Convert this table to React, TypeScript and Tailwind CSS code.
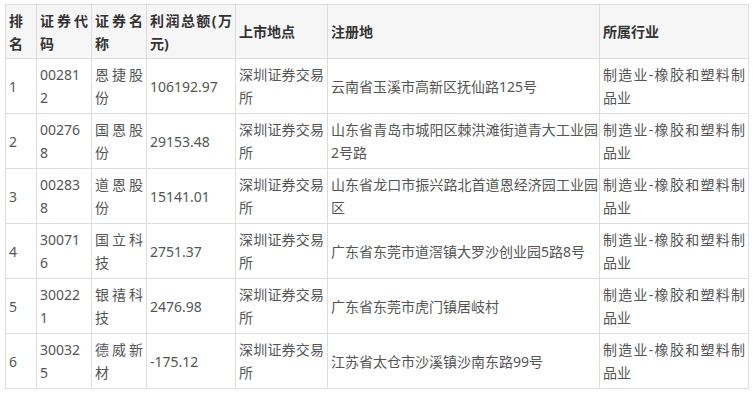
const rows = [
  ["1", "002812", "恩捷股份", "106192.97", "深圳证券交易所", "云南省玉溪市高新区抚仙路125号", "制造业-橡胶和塑料制品业"],
  ["2", "002768", "国恩股份", "29153.48", "深圳证券交易所", "山东省青岛市城阳区棘洪滩街道青大工业园2号路", "制造业-橡胶和塑料制品业"],
  ["3", "002838", "道恩股份", "15141.01", "深圳证券交易所", "山东省龙口市振兴路北首道恩经济园工业园区", "制造业-橡胶和塑料制品业"],
  ["4", "300716", "国立科技", "2751.37", "深圳证券交易所", "广东省东莞市道滘镇大罗沙创业园5路8号", "制造业-橡胶和塑料制品业"],
  ["5", "300221", "银禧科技", "2476.98", "深圳证券交易所", "广东省东莞市虎门镇居岐村", "制造业-橡胶和塑料制品业"],
  ["6", "300325", "德威新材", "-175.12", "深圳证券交易所", "江苏省太仓市沙溪镇沙南东路99号", "制造业-橡胶和塑料制品业"],
];

const headers = ["排名", "证券代码", "证券名称", "利润总额(万元)", "上市地点", "注册地", "所属行业"];
const widths = [31, 55, 55, 89, 92, 272, 149];
// the address column needs a tighter right edge so 19 characters fit on a line
const pad = (i: number) => (i === 5 ? "pl-[3px] pr-[1px]" : "px-[3px]");

export default function App() {
  return (
    <div className="bg-white w-[753px] h-[394px] pl-[5px] pt-[4px] font-['Noto_Sans','Noto_Sans_CJK_SC',sans-serif]">
      <table className="table-fixed border-collapse w-[744px] text-[14px] leading-[23px]">
        <colgroup>
          {widths.map((w, i) => (
            <col key={i} style={{ width: w }} />
          ))}
        </colgroup>
        <thead>
          <tr className="bg-[#f6f6f6] h-[54px]">
            {headers.map((h, i) => (
              <th
                key={h}
                className={`border border-[#dddddd] ${pad(i)} py-[3px] text-justify align-middle font-bold text-[#333333] break-all`}
              >
                {h}
              </th>
            ))}
          </tr>
        </thead>
        <tbody>
          {rows.map((r) => (
            <tr key={r[0]} className="h-[55px]">
              {r.map((c, i) => (
                <td
                  key={i}
                  className={`border border-[#dddddd] ${pad(i)} py-[4px] text-justify align-middle text-[#555555] break-all`}
                >
                  {c}
                </td>
              ))}
            </tr>
          ))}
        </tbody>
      </table>
    </div>
  );
}
